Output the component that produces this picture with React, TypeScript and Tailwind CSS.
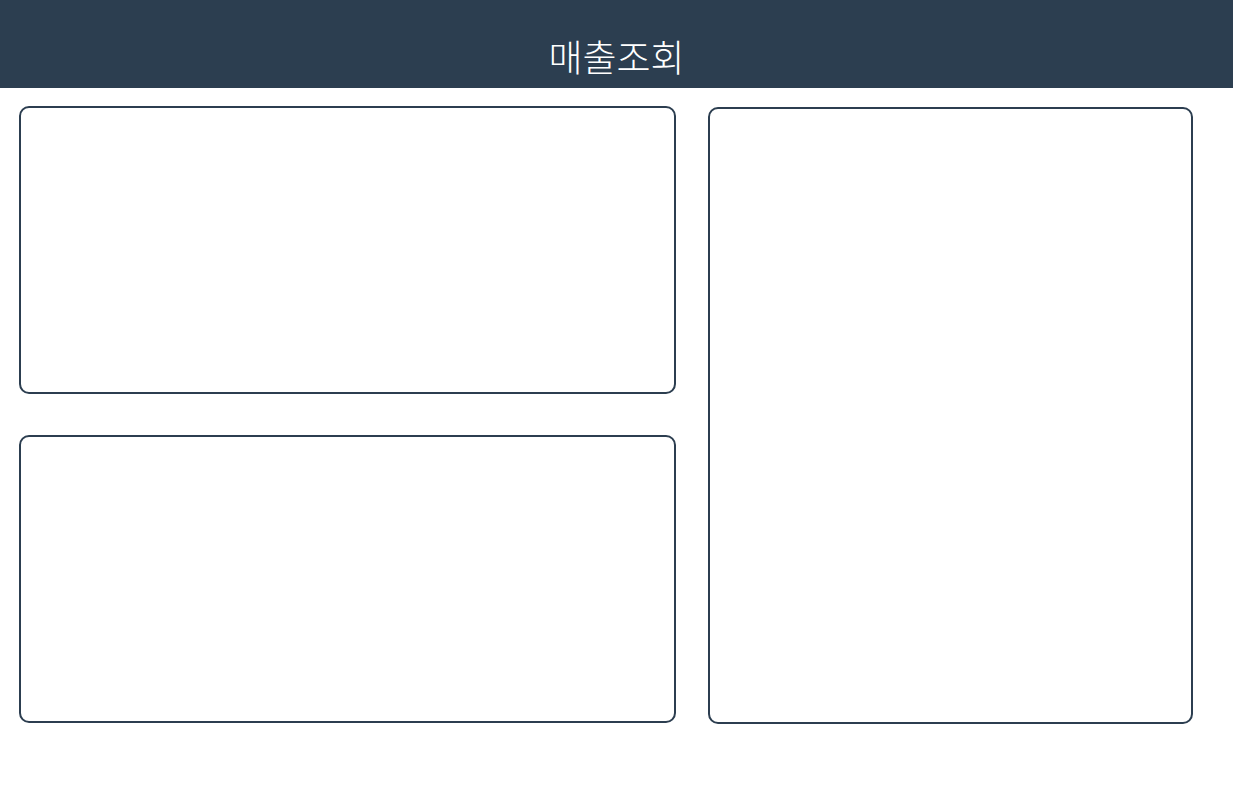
const App = () => {
  return (
    <div className="min-h-screen bg-white" style={{ fontFamily: '"Noto Sans CJK KR", "Noto Sans", sans-serif' }}>
      {/* Header */}
      <header className="h-[88px] bg-[#2c3e50] flex justify-center">
        <h1 className="mt-[29px] text-[37px] leading-[55px] font-extralight text-white">매출조회</h1>
      </header>

      {/* Panels */}
      <div className="flex pl-[19px] pt-[18px]">
        <div className="flex flex-col w-[657px] gap-[41px]">
          <div className="h-[288px] rounded-[10px] border-2 border-[#2c3e50]" />
          <div className="h-[288px] rounded-[10px] border-2 border-[#2c3e50]" />
        </div>
        <div className="ml-[32px] mt-[1px] w-[485px] h-[617px] rounded-[10px] border-2 border-[#2c3e50]" />
      </div>
    </div>
  );
};

export default App;
